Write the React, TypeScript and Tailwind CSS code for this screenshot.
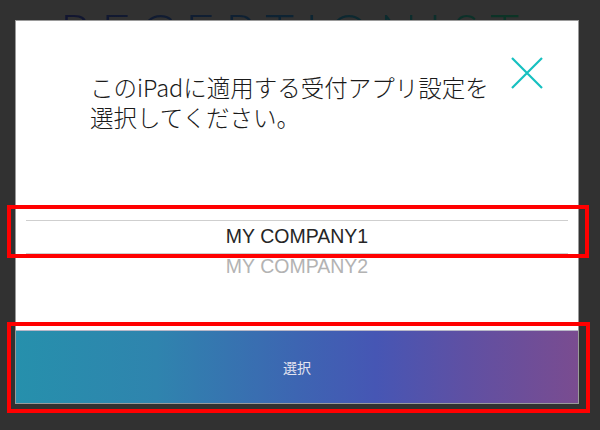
import React from "react";

export default function App() {
  return (
    <div className="relative w-[600px] h-[430px] overflow-hidden bg-[#313131]">
      {/* background brand text */}
      <div
        className="absolute left-[60px] top-[6px] text-[50px] leading-none tracking-[0.22em] font-light bg-gradient-to-r from-[#121530] via-[#0d2433] to-[#0c3524] bg-clip-text text-transparent whitespace-nowrap"
        style={{ fontFamily: "Lato, 'Liberation Sans', sans-serif" }}
      >
        RECEPTIONIST
      </div>

      {/* modal */}
      <div className="absolute left-[15px] top-[20px] w-[564px] h-[384px] bg-white border border-[#9a9a9a] flex flex-col">
        <div className="relative pt-[51px] pl-[74px] pr-[60px]">
          <p
            className="text-[23.5px] leading-[30px] font-light text-[#1a1a1a] whitespace-nowrap"
            style={{ fontFamily: "'Noto Sans CJK JP', 'Noto Sans', sans-serif" }}
          >
            このiPadに適用する受付アプリ設定を
            <br />
            選択してください。
          </p>
          <button className="absolute right-[35px] top-[36px] w-[32px] h-[32px]">
            <svg viewBox="0 0 32 32" className="w-[32px] h-[32px]">
              <path d="M1 1 L31 31 M31 1 L1 31" stroke="#16c0c0" strokeWidth="2.2" fill="none" />
            </svg>
          </button>
        </div>

        <div
          className="mt-[88px] mx-[10px] flex flex-col"
          style={{ fontFamily: "'Liberation Sans', Arial, sans-serif" }}
        >
          <div className="h-[34px] border-t border-b border-[#cfcfcf] flex items-center justify-center text-[19.5px] text-[#262626]">
            MY COMPANY1
          </div>
          <div className="h-[26px] flex items-center justify-center text-[19.5px] text-[#b3b3b3]">
            MY COMPANY2
          </div>
        </div>

        <div className="flex-1" />

        <button
          className="h-[73px] w-full border-t border-[#b8b8c8] flex items-center justify-center text-[14px] text-[#e4e4f0] bg-[linear-gradient(90deg,#2690ac_0%,#2f84ae_25%,#3d65b2_50%,#4656b4_64%,#5f50a3_80%,#7a4c90_100%)]"
          style={{ fontFamily: "'Noto Sans CJK JP', sans-serif" }}
        >
          選択
        </button>
      </div>

      {/* annotation boxes */}
      <div className="absolute left-[7px] top-[205px] w-[582px] h-[53px] border-[4px] border-[#ff0000]" />
      <div className="absolute left-[7px] top-[322px] w-[583px] h-[91px] border-[4px] border-[#ff0000]" />
    </div>
  );
}
